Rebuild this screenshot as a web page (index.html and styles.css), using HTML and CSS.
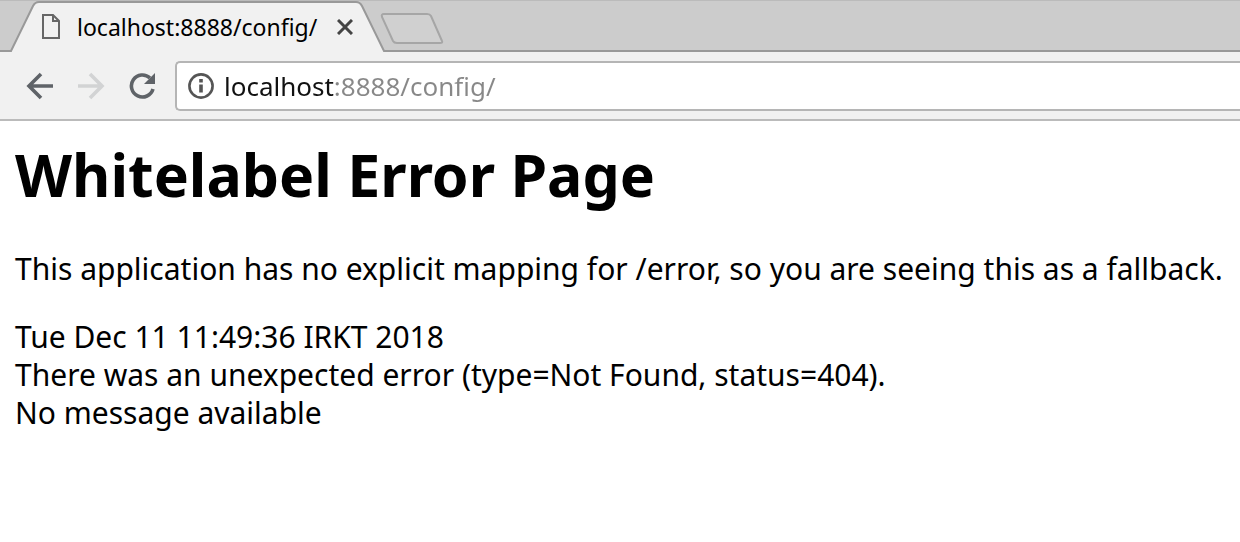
FILE: index.html
```html
<!DOCTYPE html>
<html lang="en">
<head>
    <meta charset="UTF-8">
    <meta name="viewport" content="width=device-width, initial-scale=1.0">
    <title>localhost:8888/config/</title>
    <link rel="stylesheet" href="styles.css">
</head>
<body>
    <header class="browser">
        <div class="tab-strip">
            <div class="tab">
                <svg class="tab-shape" viewBox="0 0 378 52" aria-hidden="true">
                    <path d="M2 51 L24 5 Q26 1 30 1 L347 1 Q351 1 353 5 L376 51 V52 H2 Z" fill="#f1f1f1"/>
                    <path d="M0 50 H2 L24 5 Q26 1 30 1 L347 1 Q351 1 353 5 L375 50 H378" fill="none" stroke="#999" stroke-width="2"/>
                </svg>
                <svg class="file-icon" viewBox="0 0 20 27" aria-hidden="true">
                    <path d="M2 2 H12 L18 8 V25 H2 Z M12 2 V8 H18" fill="none" stroke="#666" stroke-width="2"/>
                </svg>
                <span class="tab-title">localhost:8888/config/</span>
                <button class="close-tab" type="button" aria-label="Close tab">
                    <svg class="close-icon" viewBox="0 0 16 16" aria-hidden="true">
                        <path d="M1 1 L15 15 M15 1 L1 15" stroke="#444" stroke-width="3"/>
                    </svg>
                </button>
            </div>
            <button class="new-tab" type="button" aria-label="New tab">
                <svg class="new-tab-shape" viewBox="0 0 64 32" aria-hidden="true">
                    <path d="M4 1 H47 Q50 1 51 3 L62 28 Q63 30 60 30 H17 Q14 30 13 28 L2 4 Q1 1 4 1 Z" fill="#d0d0d0" stroke="#a6a6a6" stroke-width="2"/>
                </svg>
            </button>
        </div>

        <div class="toolbar">
            <button class="nav-btn" type="button" aria-label="Back">
                <svg class="nav-icon" viewBox="0 0 28 28" aria-hidden="true">
                    <path d="M27 14 H4 M15 2 L3 14 L15 26" fill="none" stroke="#5f6368" stroke-width="3.6"/>
                </svg>
            </button>
            <button class="nav-btn" type="button" aria-label="Forward" disabled>
                <svg class="nav-icon" viewBox="0 0 28 28" aria-hidden="true">
                    <path d="M1 14 H24 M13 2 L25 14 L13 26" fill="none" stroke="#d2d3d4" stroke-width="3.6"/>
                </svg>
            </button>
            <button class="nav-btn" type="button" aria-label="Reload">
                <svg class="nav-icon" viewBox="0 0 28 28" aria-hidden="true">
                    <path d="M25 17 A11 11 0 1 1 22 6" fill="none" stroke="#5f6368" stroke-width="3.6"/>
                    <path d="M27 1 V12 H16 Z" fill="#5f6368"/>
                </svg>
            </button>
            <div class="address-bar">
                <svg class="info-icon" viewBox="0 0 26 26" aria-hidden="true">
                    <circle cx="13" cy="13" r="11.6" fill="none" stroke="#555" stroke-width="2.6"/>
                    <path d="M11.2 11.5 H14.8 V19.5 H11.2 Z M11.2 6 H14.8 V9.4 H11.2 Z" fill="#555"/>
                </svg>
                <input class="address" type="text" value="localhost:8888/config/" aria-label="Address" spellcheck="false">
            </div>
        </div>
    </header>

    <main class="page">
        <h1>Whitelabel Error Page</h1>
        <p>This application has no explicit mapping for /error, so you are seeing this as a fallback.</p>
        <div>Tue Dec 11 11:49:36 IRKT 2018</div>
        <div>There was an unexpected error (type=Not Found, status=404).</div>
        <div>No message available</div>
    </main>
</body>
</html>
```
FILE: styles.css
```css
* {
    box-sizing: border-box;
}
body {
    margin: 0;
    background: #fff;
    color: #000;
    font-family: "Noto Sans", "Open Sans", sans-serif;
}
button {
    padding: 0;
    border: 0;
    background: none;
    cursor: pointer;
}
svg {
    display: block;
}

.tab-strip {
    display: flex;
    height: 52px;
    padding-left: 9px;
    background: #ccc;
    border-top: 1px solid #bbb;
    border-bottom: 2px solid #999;
}
.tab {
    position: relative;
    display: flex;
    align-items: center;
    width: 378px;
    height: 51px;
    padding: 0 34px 0 32px;
}
.tab-shape {
    position: absolute;
    left: 0;
    top: 0;
    width: 378px;
    height: 52px;
}
.file-icon, .tab-title, .close-tab {
    position: relative;
}
.file-icon {
    width: 20px;
    height: 27px;
}
.tab-title {
    flex: 1;
    margin-left: 16px;
    font-size: 23px;
    line-height: 32px;
    white-space: nowrap;
}
.close-icon {
    width: 16px;
    height: 16px;
}
.new-tab {
    align-self: flex-start;
    margin: 12px 0 0 -7px;
}
.new-tab-shape {
    width: 64px;
    height: 32px;
}

.toolbar {
    display: flex;
    align-items: center;
    gap: 23px;
    padding: 9px 0 8px 26px;
    background: #f1f1f1;
    border-bottom: 2px solid #bbb;
}
.nav-icon {
    width: 28px;
    height: 28px;
}
.address-bar {
    display: flex;
    flex: 1;
    align-items: center;
    gap: 10px;
    height: 50px;
    margin-left: -4px;
    padding-left: 11px;
    background: #fff;
    border: 2px solid #b5b5b5;
    border-right: 0;
    border-radius: 5px 0 0 5px;
}
.info-icon {
    width: 26px;
    height: 26px;
}
.address {
    flex: 1;
    min-width: 0;
    padding: 0;
    border: 0;
    outline: none;
    font-family: inherit;
    font-size: 26px;
    line-height: 36px;
    /* host in black, port and path in grey */
    color: transparent;
    caret-color: #000;
    background: linear-gradient(to right, #111 110px, #888 110px);
    -webkit-background-clip: text;
    background-clip: text;
}

.page {
    padding: 13px 15px;
    font-size: 30px;
    line-height: 38px;
}
h1 {
    margin: 0;
    font-size: 59px;
    line-height: 80px;
}
p {
    margin: 36px 0 30px;
}
```
